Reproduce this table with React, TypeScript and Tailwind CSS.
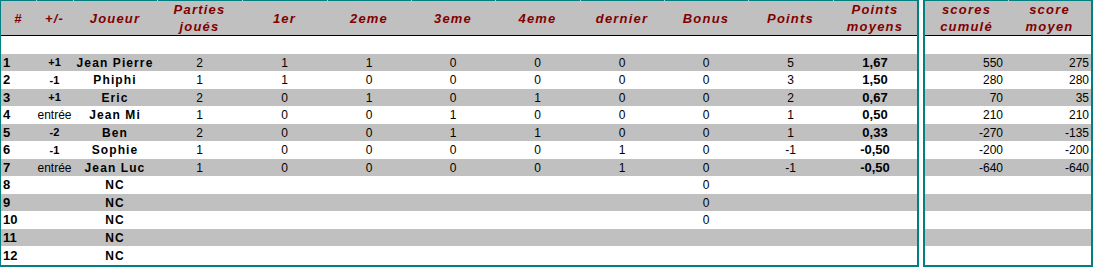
import React from "react";

const W = [
  "w-[35px]",
  "w-[37px]",
  "w-[84px]",
  "w-[85px]",
  "w-[85px]",
  "w-[84px]",
  "w-[84px]",
  "w-[85px]",
  "w-[84px]",
  "w-[84px]",
  "w-[85px]",
  "w-[84px]",
];

const heads = [
  ["#"],
  ["+/-"],
  ["Joueur"],
  ["Parties", "joués"],
  ["1er"],
  ["2eme"],
  ["3eme"],
  ["4eme"],
  ["dernier"],
  ["Bonus"],
  ["Points"],
  ["Points", "moyens"],
];

type Row = {
  n: number;
  diff?: string;
  name: string;
  vals?: (number | string)[];
  bonus?: number;
  pts?: number;
  avg?: string;
  cum?: number;
  moy?: number;
};

const rows: Row[] = [
  { n: 1, diff: "+1", name: "Jean Pierre", vals: [2, 1, 1, 0, 0, 0], bonus: 0, pts: 5, avg: "1,67", cum: 550, moy: 275 },
  { n: 2, diff: "-1", name: "Phiphi", vals: [1, 1, 0, 0, 0, 0], bonus: 0, pts: 3, avg: "1,50", cum: 280, moy: 280 },
  { n: 3, diff: "+1", name: "Eric", vals: [2, 0, 1, 0, 1, 0], bonus: 0, pts: 2, avg: "0,67", cum: 70, moy: 35 },
  { n: 4, diff: "entrée", name: "Jean Mi", vals: [1, 0, 0, 1, 0, 0], bonus: 0, pts: 1, avg: "0,50", cum: 210, moy: 210 },
  { n: 5, diff: "-2", name: "Ben", vals: [2, 0, 0, 1, 1, 0], bonus: 0, pts: 1, avg: "0,33", cum: -270, moy: -135 },
  { n: 6, diff: "-1", name: "Sophie", vals: [1, 0, 0, 0, 0, 1], bonus: 0, pts: -1, avg: "-0,50", cum: -200, moy: -200 },
  { n: 7, diff: "entrée", name: "Jean Luc", vals: [1, 0, 0, 0, 0, 1], bonus: 0, pts: -1, avg: "-0,50", cum: -640, moy: -640 },
  { n: 8, name: "NC", bonus: 0 },
  { n: 9, name: "NC", bonus: 0 },
  { n: 10, name: "NC", bonus: 0 },
  { n: 11, name: "NC" },
  { n: 12, name: "NC" },
];

// row heights alternate like the sheet, last one a pixel taller
const rowClass = (i: number) =>
  i % 2 === 0
    ? "h-[17px] bg-[#c0c0c0]"
    : i === rows.length - 1
    ? "h-[19px] bg-white"
    : "h-[18px] bg-white";

const HeadCell = ({ w, lines, first }: { w: string; lines: string[]; first?: boolean }) => (
  <div className={`${w} flex flex-col`}>
    <div className="flex h-px bg-[#008080]">{!first && <div className="w-px bg-[#bcd6d6]" />}</div>
    <div className="flex flex-1 flex-col items-center justify-center leading-[17px]">
      {lines.map((l) => (
        <span key={l}>{l}</span>
      ))}
    </div>
  </div>
);

const headText = "italic font-bold text-[13px] tracking-[1.2px] text-[#800000]";

const App = () => {
  return (
    <div className="flex w-[1093px] h-[267px] bg-white font-['Liberation_Sans',Arial,sans-serif] text-[12px] text-black">
      {/* classement */}
      <div className="flex w-[919px] flex-col border-l border-r-2 border-b-2 border-[#008080]">
        <div className={`flex h-[35px] bg-[#c0c0c0] ${headText}`}>
          {heads.map((h, i) => (
            <HeadCell key={i} w={W[i]} lines={h} first={i === 0} />
          ))}
        </div>
        <div className="h-px bg-black" />
        <div className="h-[18px]" />
        {rows.map((r, i) => (
          <div key={r.n} className={`flex items-center ${rowClass(i)}`}>
            <div className={`${W[0]} pl-[2px] font-bold text-[13px]`}>{r.n}</div>
            <div
              className={`${W[1]} text-center ${
                r.diff === "entrée" ? "text-[12px]" : "font-bold text-[11px]"
              }`}
            >
              {r.diff}
            </div>
            <div className={`${W[2]} text-center font-bold text-[12px] tracking-[1.1px]`}>{r.name}</div>
            {[0, 1, 2, 3, 4, 5].map((k) => (
              <div key={k} className={`${W[3 + k]} text-center`}>
                {r.vals ? r.vals[k] : ""}
              </div>
            ))}
            <div className={`${W[9]} text-center`}>{r.bonus ?? ""}</div>
            <div className={`${W[10]} text-center`}>{r.pts ?? ""}</div>
            <div className={`${W[11]} text-center font-bold text-[13px]`}>{r.avg ?? ""}</div>
          </div>
        ))}
      </div>

      <div className="w-[4px]" />

      {/* scores */}
      <div className="flex w-[170px] flex-col border-l-2 border-r-2 border-b-2 border-[#008080]">
        <div className={`flex h-[35px] bg-[#c0c0c0] ${headText}`}>
          <HeadCell w="w-[83px]" lines={["scores", "cumulé"]} first />
          <HeadCell w="w-[83px]" lines={["score", "moyen"]} />
        </div>
        <div className="h-px bg-black" />
        <div className="h-[18px]" />
        {rows.map((r, i) => (
          <div key={r.n} className={`flex items-center ${rowClass(i)}`}>
            <div className="w-[83px] pr-[5px] text-right">{r.cum ?? ""}</div>
            <div className="w-[83px] pr-[2px] text-right">{r.moy ?? ""}</div>
          </div>
        ))}
      </div>
    </div>
  );
};

export default App;
